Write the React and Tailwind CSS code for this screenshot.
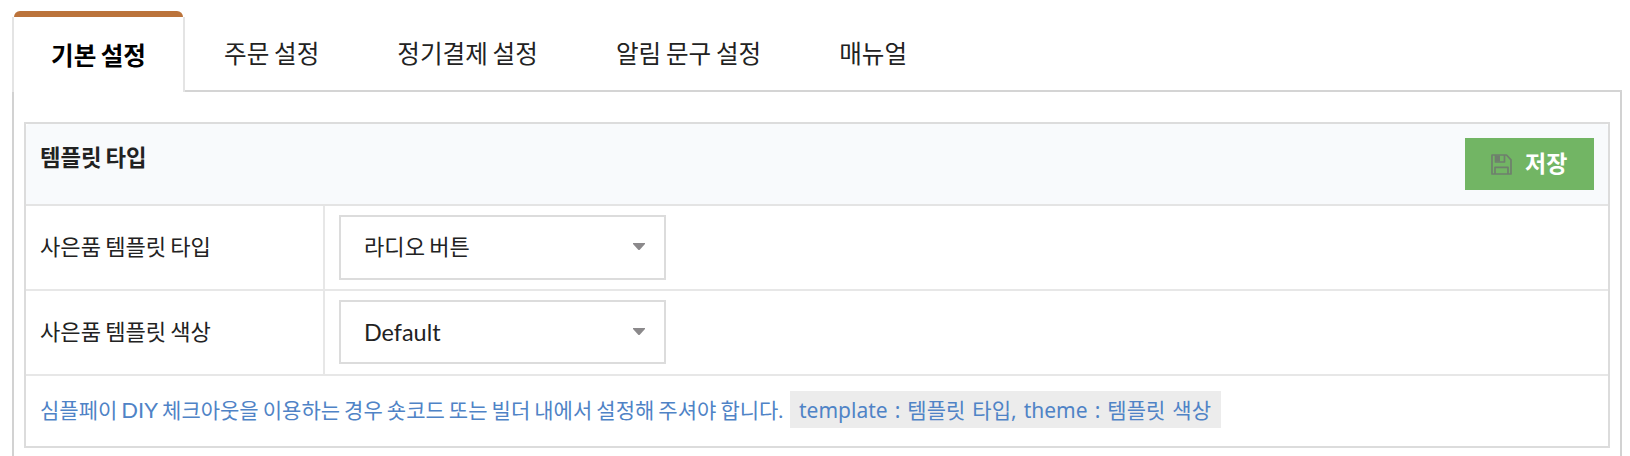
import React, { useState } from 'react';

const tabs = [
  { label: '주문 설정', className: 'ml-[39px]' },
  { label: '정기결제 설정', className: 'ml-[78px]' },
  { label: '알림 문구 설정', className: 'ml-[78px]' },
  { label: '매뉴얼', className: 'ml-[78px]' },
];

const SaveIcon = () => (
  <svg width="21" height="21" viewBox="0 0 21 21" fill="none" stroke="#6f7f6d" strokeWidth="1.7" strokeLinejoin="round">
    <path d="M1 1h14.5l4.5 4.8V20H1z" />
    <path d="M4 20v-6.7h13V20" />
    <path d="M4.5 1v7h9V1" />
    <path d="M5 1.5h4v6H5z" fill="#6f7f6d" stroke="none" />
  </svg>
);

const Row = ({ label, value, selectClass, valueClass }) => (
  <div className="flex h-[85px] border-b-2 border-[#e7e7e7]">
    <div className="flex w-[299px] items-center border-r-2 border-[#e7e7e7] pl-[14px] text-[22.1px] [word-spacing:-1.5px]">
      <span>{label}</span>
    </div>
    <div className="pt-[9px] pl-[14px]">
      <button className={`flex w-[327px] items-center justify-between border-2 border-[#dcdcdc] pr-[19px] pl-[23px] [word-spacing:-1.5px] ${selectClass}`}>
        <span className={valueClass}>{value}</span>
        <svg width="12" height="7" viewBox="0 0 12 7" className="relative -top-px">
          <path d="M0 0h12v1L7 6.4Q6 7.4 5 6.4L0 1z" fill="#8b898b" />
        </svg>
      </button>
    </div>
  </div>
);

const App = () => {
  const [type] = useState('라디오 버튼');
  const [theme] = useState('Default');

  return (
    <div className="h-[456px] overflow-hidden bg-white pt-[11px] pr-2 pl-3 font-[Lato,'Noto_Sans_CJK_KR',sans-serif] text-[#222]">
      <div className="flex h-[81px] text-[24.6px] leading-none [word-spacing:-1.5px]">
        <div className="flex w-[173px] flex-col">
          <div className="mx-[2px] h-[6px] shrink-0 rounded-t-[6px] bg-[#bb733b]" />
          <div className="flex flex-1 items-center justify-center border-x-2 border-[#e4e4e4] pt-[3px] font-bold text-black">
            <span>기본 설정</span>
          </div>
        </div>
        <div className="flex flex-1 items-center border-b-2 border-[#d4d4d4] pt-[7px]">
          {tabs.map((tab) => (
            <span key={tab.label} className={tab.className}>{tab.label}</span>
          ))}
        </div>
      </div>

      <div className="h-[400px] border-x-2 border-[#d2d2d2] px-[10px] pt-[30px]">
        <div className="border-2 border-[#dcdcdc] leading-none">
          <div className="flex h-[82px] justify-between rounded-t-[4px] border-b-2 border-[#e4e4e4] bg-[#f8fafc] pr-[14px] pl-[14px]">
            <h2 className="pt-[23px] text-[22.3px] font-bold [word-spacing:-1.5px]">템플릿 타입</h2>
            <button className="mt-[14px] flex h-[52px] w-[129px] items-center bg-[#72b564] pl-[26px] text-[23px] font-bold text-white">
              <SaveIcon />
              <span className="relative -top-px ml-[13px]">저장</span>
            </button>
          </div>

          <Row label="사은품 템플릿 타입" value={type} selectClass="h-[65px]" valueClass="text-[22.1px]" />
          <Row label="사은품 템플릿 색상" value={theme} selectClass="h-[64px]" valueClass="relative top-px text-[23.4px]" />

          <div className="flex h-[70px] items-start pt-[15px] pl-[14px] text-[21px] text-[#4f83c6]">
            <span className="w-[750px] flex-none pt-[8px] whitespace-nowrap [word-spacing:-1.3px]">
              심플페이 <span className="text-[22px] leading-[0]">DIY</span> 체크아웃을 이용하는 경우 숏코드 또는 빌더 내에서 설정해 주셔야 합니다.
            </span>
            <code className="flex h-[37px] w-[431px] items-center bg-[#ececec] pt-[2px] pl-[9px] font-['Noto_Sans','Noto_Sans_CJK_KR',sans-serif] whitespace-nowrap [word-spacing:1.6px]">
              template : 템플릿 타입, theme : 템플릿 색상
            </code>
          </div>
        </div>
      </div>
    </div>
  );
};

export default App;
